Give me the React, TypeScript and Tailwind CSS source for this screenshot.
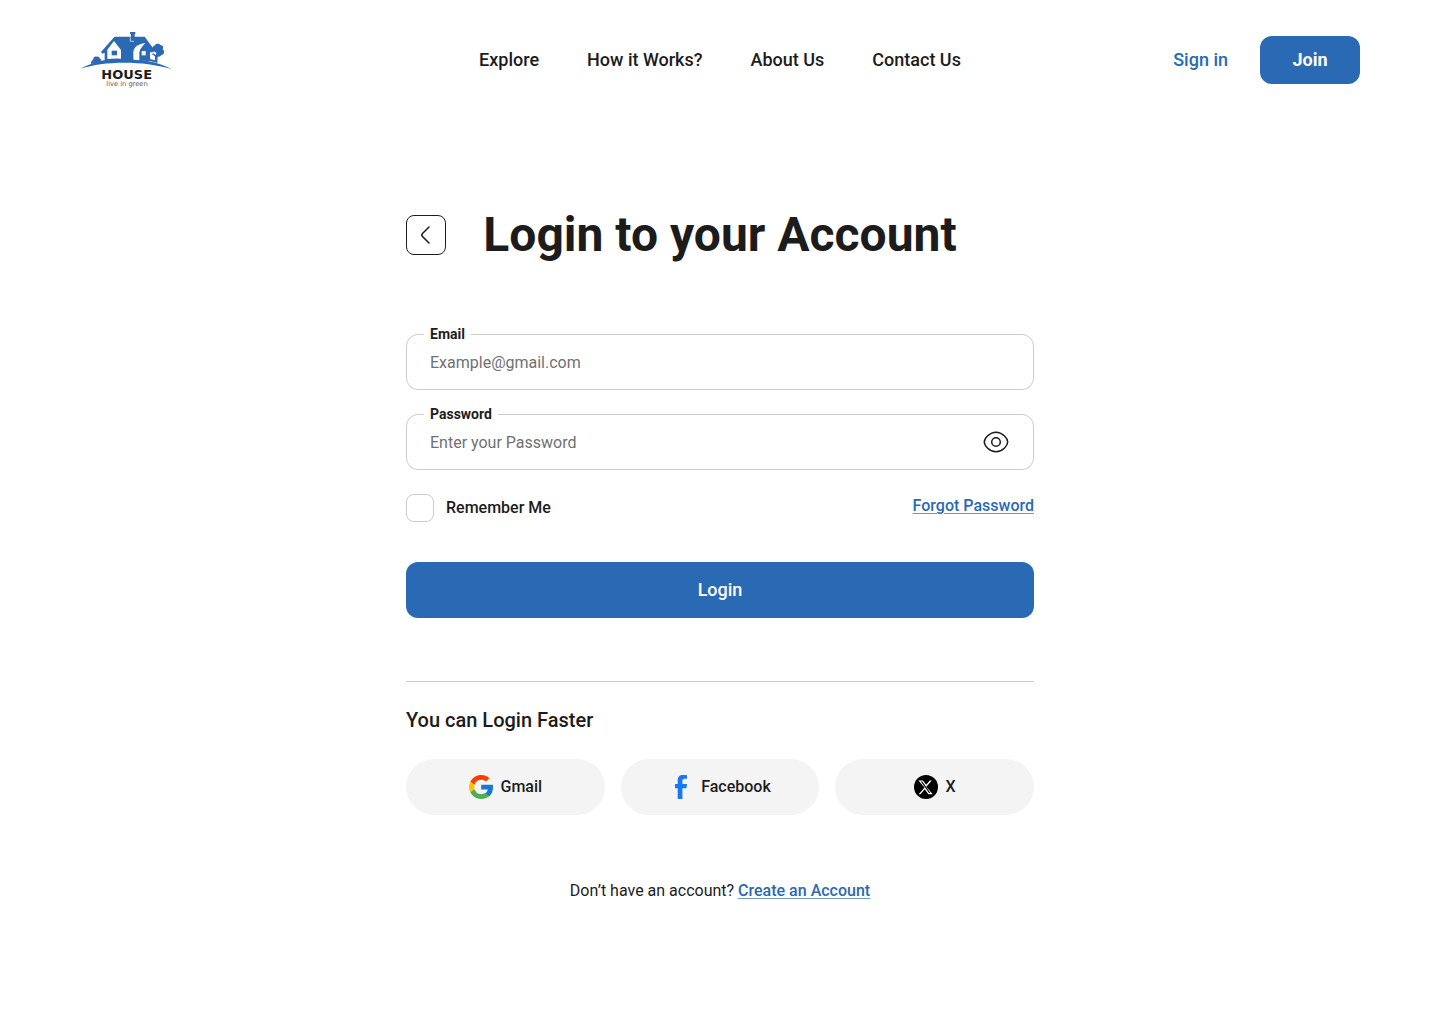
import { useState } from "react";
import type { ReactNode } from "react";

function Logo() {
  return (
    <svg width="92" height="56" viewBox="12 24 276 168" role="img" aria-label="House, live in green">
      <g fill="#2A69B3">
        <path d="M14 134 C46 116 84 104 140 104 C205 104 254 117 287 135 C240 122 195 116 146 116 C92 116 52 122 14 134Z" />
        <path d="M45 120 C44 112 49 109 52 106 C51 99 58 96 61 98 C66 96 72 99 72 105 C77 106 77 111 75 114 Z" />
        <path d="M75 84 L112 42 L116 38 H165 V30 H162 V24 H178 V30 H176 V38 H206 L237 80 L230 85 H222 V112 L190 109 L140 107 L86 111 V86 L80 89Z" />
        <path d="M231 76 C227 68 233 65 236 65 C238 58 250 58 253 63 C261 64 264 70 260 76 C268 82 264 93 256 93 C253 98 249 98 245 98 L244 117 L222 111 V105 L237 109 V97 L228 91 L231 88 L240 93 L241 86 C235 84 232 80 231 76Z" />
      </g>
      <g fill="#fff">
        <path d="M94 105 V77 L114 51 L135 78 V104 Q114 103 94 105Z" />
        <path d="M172 107 V85 C173 69 186 60 208 57 C199 67 190 76 190 88 V109Z" />
        <path d="M197 81 H209 V94 H197Z" />
      </g>
      <path d="M163 40 V52 H174" fill="none" stroke="#fff" strokeWidth="2" />
      <path d="M107 80 H123 V94 H107Z" fill="#2A69B3" />
      <text x="152" y="164" textAnchor="middle" fill="#1C1C1C" fontFamily="DejaVu Sans, sans-serif" fontWeight="700" fontSize="39">
        HOUSE
      </text>
      <text x="153" y="187" textAnchor="middle" fill="#555" fontFamily="DejaVu Sans, sans-serif" fontSize="20">
        live in green
      </text>
    </svg>
  );
}

function GoogleIcon() {
  return (
    <svg width="24" height="24" viewBox="0 0 24 24" aria-hidden="true">
      <path fill="#1976D2" d="M24 12.2c0-.9-.1-1.7-.2-2.500H12.200v4.800h6.600a5.700 5.700 0 0 1-2.500 3.700v3.100h4c2.400-2.200 3.700-5.300 3.700-9.100Z" />
      <path fill="#4CAF50" d="M12.200 24c3.300 0 6.100-1.100 8.100-2.900l-4-3c-1.100.7-2.500 1.100-4.100 1.100a7.200 7.200 0 0 1-6.700-4.900H1.400v3.200A12.200 12 0 0 0 12.200 24Z" />
      <path fill="#FFC107" d="M5.500 14.300a7.200 7.200 0 0 1 0-4.600V6.600H1.400a12 12 0 0 0 0 10.800l4.100-3.100Z" />
      <path fill="#FF3D00" d="M12.200 4.800c1.800 0 3.400.6 4.700 1.800l3.500-3.400A12 12 0 0 0 12.200 0C7.500 0 3.400 2.600 1.400 6.600l4.100 3.100a7.200 7.200 0 0 1 6.700-4.900Z" />
    </svg>
  );
}

function FacebookIcon() {
  return (
    <svg width="24" height="24" viewBox="0 0 24 24" aria-hidden="true">
      <path fill="#1877F2" d="M8.700 24V13.200H6V9h2.700V5.700C8.700 1.900 10.400 0 14.100 0c1.700 0 3 .1 3.900.2v3.600h-2.200c-2 0-2.400.9-2.400 2.300V9H18l-.6 4.200h-4V24Z" />
    </svg>
  );
}

function XIcon() {
  return (
    <svg width="24" height="24" viewBox="0 0 24 24" aria-hidden="true">
      <circle cx="12" cy="12" r="12" fill="#000" />
      <path
        transform="translate(4.700 4.700) scale(.608)"
        fill="#fff"
        d="M18.244 1.250h3.308l-9 10.260L23.100 23.750h-7.200l-6-7.900-6.900 7.900H0l9.600-10.900L-.5 1.250h7.400l5.500 7.200Zm-1.200 20.500h2.200L5.900 3.150H3.500Z"
      />
    </svg>
  );
}

function Field({ id, label, children }: { id: string; label: string; children: ReactNode }) {
  return (
    <div className="relative flex h-14 items-center rounded-xl border border-[#CBCBCB] px-[23px]">
      <label htmlFor={id} className="absolute -top-[11px] left-[17px] bg-white px-1.5 text-sm font-bold leading-5">
        {label}
      </label>
      {children}
    </div>
  );
}

const links = ["Explore", "How it Works?", "About Us", "Contact Us"];

const providers = [
  { name: "Gmail", icon: <GoogleIcon /> },
  { name: "Facebook", icon: <FacebookIcon /> },
  { name: "X", icon: <XIcon /> },
];

const inputClass =
  "min-w-0 flex-1 bg-transparent pt-px text-base leading-6 outline-none placeholder:text-[#717171]";

const linkClass = "font-medium text-[#2A69B3] underline decoration-[#2A69B3]/70 decoration-1 underline-offset-2";

export default function App() {
  const [visible, setVisible] = useState(false);

  return (
    <div className="min-h-screen bg-white font-['Roboto',sans-serif] text-[#1C1C1C]">
      <header className="grid h-30 grid-cols-[1fr_auto_1fr] items-center px-20">
        <a href="#" className="justify-self-start">
          <Logo />
        </a>
        <nav className="flex gap-12 text-lg font-medium">
          {links.map((link) => (
            <a key={link} href="#">
              {link}
            </a>
          ))}
        </nav>
        <div className="flex items-center gap-8 justify-self-end text-lg font-medium">
          <a href="#" className="text-[#2A69B3]">
            Sign in
          </a>
          <button type="button" className="h-12 w-25 rounded-xl bg-[#2A69B3] font-bold text-white">
            Join
          </button>
        </div>
      </header>

      <main className="mx-auto max-w-[628px] pt-20">
        <div className="grid grid-cols-[40px_1fr_40px] items-center">
          <button
            type="button"
            aria-label="Go back"
            className="flex size-10 items-center justify-center rounded-lg border border-[#1C1C1C]"
          >
            <svg width="24" height="24" viewBox="0 0 24 24" fill="none" stroke="currentColor" strokeWidth="1.5" strokeLinecap="round" aria-hidden="true">
              <path d="M15 4 L8.500 10.500 Q7 12 8.500 13.500 L15 20" />
            </svg>
          </button>
          <h1 className="text-center text-5xl font-bold leading-[70px]">Login to your Account</h1>
        </div>

        <form className="mt-16" onSubmit={(event) => event.preventDefault()}>
          <div className="flex flex-col gap-6">
            <Field id="email" label="Email">
              <input id="email" type="email" placeholder="Example@gmail.com" className={inputClass} />
            </Field>
            <Field id="password" label="Password">
              <input
                id="password"
                type={visible ? "text" : "password"}
                placeholder="Enter your Password"
                className={inputClass}
              />
              <button type="button" aria-label="Show password" onClick={() => setVisible(!visible)}>
                <svg width="28" height="28" viewBox="0 0 28 28" fill="none" stroke="currentColor" strokeWidth="1.5" aria-hidden="true">
                  <path d="M2.300 14 C2.300 10.500 7.500 4.200 14 4.200 S25.700 10.500 25.700 14 S20.500 23.800 14 23.800 S2.300 17.500 2.300 14Z" />
                  <circle cx="14" cy="14" r="4.300" />
                </svg>
              </button>
            </Field>
          </div>

          <div className="mt-6 flex items-start justify-between leading-6">
            <label className="flex items-center gap-3 font-medium">
              <input
                type="checkbox"
                className="size-7 appearance-none rounded-lg border border-[#CBCBCB] checked:bg-[#2A69B3]"
              />
              Remember Me
            </label>
            <a href="#" className={linkClass}>
              Forgot Password
            </a>
          </div>

          <button type="submit" className="mt-10 h-14 w-full rounded-xl bg-[#2A69B3] text-lg font-medium text-white">
            Login
          </button>
        </form>

        <section className="mt-[63px] border-t border-[#CBCBCB] pt-[23px]">
          <h2 className="text-xl font-medium leading-[30px]">You can Login Faster</h2>
          <div className="mt-6 grid grid-cols-3 gap-4">
            {providers.map(({ name, icon }) => (
              <button
                key={name}
                type="button"
                className="flex h-14 items-center justify-center gap-2 rounded-full bg-[#F4F4F4] font-medium"
              >
                {icon}
                {name}
              </button>
            ))}
          </div>
        </section>

        <p className="mt-16 text-center leading-6">
          Don’t have an account?{" "}
          <a href="#" className={linkClass}>
            Create an Account
          </a>
        </p>
      </main>
    </div>
  );
}
